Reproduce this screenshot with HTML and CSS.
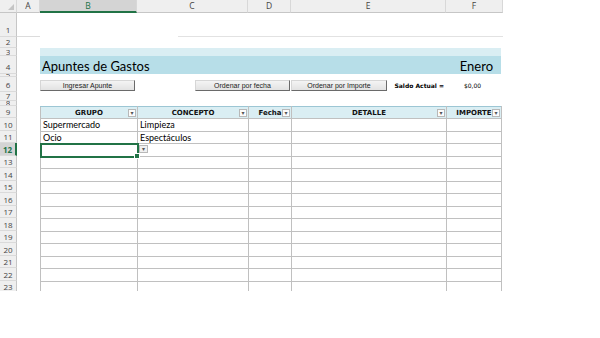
FILE: index.html
```html
<!DOCTYPE html>
<html lang="es">
<head>
    <meta charset="UTF-8">
    <meta name="viewport" content="width=device-width, initial-scale=1.0">
    <title>Apuntes de Gastos</title>
    <link rel="stylesheet" href="styles.css">
</head>
<body>

<div class="sheet">
    <div class="col-heads">
        <div class="corner"></div>
        <div class="col-a">A</div>
        <div class="col-b active">B</div>
        <div class="col-c">C</div>
        <div class="col-d">D</div>
        <div class="col-e">E</div>
        <div class="col-f">F</div>
    </div>

    <div class="sheet-body">
        <div class="row-heads">
            <div class="rh h1">1</div>
            <div class="rh h2">2</div>
            <div class="rh h3"><span>3</span></div>
            <div class="rh h4">4</div>
            <div class="rh h5"><span>5</span></div>
            <div class="rh h6">6</div>
            <div class="rh h7">7</div>
            <div class="rh h8"><span>8</span></div>
            <div class="rh h9">9</div>
            <div class="rh tall">10</div>
            <div class="rh">11</div>
            <div class="rh tall active">12</div>
            <div class="rh">13</div>
            <div class="rh tall">14</div>
            <div class="rh">15</div>
            <div class="rh tall">16</div>
            <div class="rh">17</div>
            <div class="rh tall">18</div>
            <div class="rh">19</div>
            <div class="rh tall">20</div>
            <div class="rh">21</div>
            <div class="rh tall">22</div>
            <div class="rh">23</div>
        </div>

        <div class="cells">
            <div class="line-row h1">
                <span class="line-a"></span>
                <span class="line-r"></span>
            </div>
            <div class="h2"></div>
            <div class="band h3"></div>
            <div class="title h4">
                <span>Apuntes de Gastos</span>
                <span>Enero</span>
            </div>
            <div class="h5"></div>
            <div class="toolbar h6">
                <button class="btn btn-ingresar">Ingresar Apunte</button>
                <button class="btn btn-fecha">Ordenar por fecha</button>
                <button class="btn btn-importe">Ordenar por Importe</button>
                <span class="saldo-label">Saldo Actual =</span>
                <span class="saldo-value">$0,00</span>
            </div>
            <div class="h7"></div>
            <div class="h8"></div>

            <table class="gastos">
                <colgroup>
                    <col class="w-b"><col class="w-c"><col class="w-d"><col class="w-e"><col class="w-f">
                </colgroup>
                <tr class="head">
                    <th>GRUPO<span class="filter">&#9662;</span></th>
                    <th>CONCEPTO<span class="filter">&#9662;</span></th>
                    <th>Fecha<span class="filter">&#9662;</span></th>
                    <th>DETALLE<span class="filter">&#9662;</span></th>
                    <th>IMPORTE<span class="filter">&#9662;</span></th>
                </tr>
                <tr class="tall"><td>Supermercado</td><td>Limpieza</td><td></td><td></td><td></td></tr>
                <tr><td>Ocio</td><td>Espectáculos</td><td></td><td></td><td></td></tr>
                <tr class="tall"><td class="active"></td><td><span class="pick">&#9662;</span></td><td></td><td></td><td></td></tr>
                <tr><td></td><td></td><td></td><td></td><td></td></tr>
                <tr class="tall"><td></td><td></td><td></td><td></td><td></td></tr>
                <tr><td></td><td></td><td></td><td></td><td></td></tr>
                <tr class="tall"><td></td><td></td><td></td><td></td><td></td></tr>
                <tr><td></td><td></td><td></td><td></td><td></td></tr>
                <tr class="tall"><td></td><td></td><td></td><td></td><td></td></tr>
                <tr><td></td><td></td><td></td><td></td><td></td></tr>
                <tr class="tall"><td></td><td></td><td></td><td></td><td></td></tr>
                <tr><td></td><td></td><td></td><td></td><td></td></tr>
                <tr class="tall"><td></td><td></td><td></td><td></td><td></td></tr>
                <tr><td></td><td></td><td></td><td></td><td></td></tr>
            </table>
        </div>
    </div>
</div>

</body>
</html>
```

FILE: styles.css
```css
* {
    box-sizing: border-box;
}
body {
    margin: 0;
    background: #fff;
    font-family: Lato, 'Open Sans', sans-serif;
    color: #000;
}
.sheet {
    width: 503px;
    height: 291px;
    overflow: hidden;
}

/* cabecera de columnas */
.col-heads {
    display: flex;
    height: 13px;
    background: #efefef;
    font-family: 'Open Sans', sans-serif;
    font-size: 8.5px;
    color: #444;
}
.col-heads div {
    border-right: 1px solid #d8d8d8;
    border-bottom: 1px solid #c6c6c6;
    text-align: center;
    line-height: 12px;
}
.col-heads .active {
    background: #d4d4d4;
    color: #217346;
    border-bottom: 2px solid #217346;
}
.corner {
    position: relative;
    width: 17px;
}
.corner::after {
    content: "";
    position: absolute;
    right: 2px;
    bottom: 2px;
    border-left: 6px solid transparent;
    border-bottom: 6px solid #c4c4c4;
}
.col-a { width: 23px; }
.col-b { width: 97px; }
.col-c { width: 111px; }
.col-d { width: 43px; }
.col-e { width: 155px; }
.col-f { width: 57px; }

/* alturas de filas */
.h1 { height: 24px; }
.h2 { height: 11px; }
.h3 { height: 8px; }
.h4 { height: 18px; }
.h5 { height: 3px; }
.h6 { height: 15px; }
.h7 { height: 9px; }
.h8 { height: 5px; }
.h9 { height: 12px; }

.sheet-body {
    display: flex;
}
.row-heads {
    width: 17px;
    background: #efefef;
}
.rh {
    height: 12px;
    border-right: 1px solid #c6c6c6;
    border-bottom: 1px solid #dadada;
    display: flex;
    align-items: flex-end;
    justify-content: center;
    overflow: hidden;
    font-family: 'Open Sans', sans-serif;
    font-size: 8px;
    line-height: 11px;
    color: #444;
}
.rh.h1 { height: 24px; padding-bottom: 1px; }
.rh.h2 { height: 11px; line-height: 10px; }
.rh.h3 { height: 8px; line-height: 7px; }
.rh.h4 { height: 18px; padding-bottom: 1px; }
.rh.h5 { height: 3px; line-height: 2px; }
.rh.h6 { height: 15px; padding-bottom: 1px; }
.rh.h7 { height: 9px; line-height: 8px; }
.rh.h8 { height: 5px; line-height: 4px; }
.rh.h9 { height: 12px; }
.rh.h3 span,
.rh.h5 span,
.rh.h8 span {
    display: block;
    overflow: hidden;
    height: 100%;
}
.rh.tall { height: 13px; }
.rh.active {
    background: #d4d4d4;
    color: #217346;
    font-weight: bold;
    border-right: 2px solid #217346;
}

.cells {
    flex: 1;
}
.line-row {
    display: flex;
    align-items: flex-end;
}
.line-a {
    width: 23px;
    border-bottom: 1px solid #dcdcdc;
}
.line-r {
    flex: 1;
    margin-left: 138px;
    border-bottom: 1px solid #e2e2e2;
}
.band {
    margin-left: 23px;
    width: 461px;
    background: #daeef3;
}
.title {
    margin-left: 23px;
    width: 461px;
    background: #b7dee8;
    display: flex;
    justify-content: space-between;
    align-items: flex-end;
    padding: 0 8px 0 2px;
    font-size: 13px;
    line-height: 16px;
}

/* botones */
.toolbar {
    display: flex;
    align-items: flex-start;
    padding: 3px 0 0 23px;
}
.btn {
    height: 11px;
    padding: 0;
    border: 1px solid #d6d6d6;
    border-right-color: #6a6a6a;
    border-bottom-color: #6a6a6a;
    background: linear-gradient(#f4f4f4, #e2e2e2);
    font-family: 'Liberation Sans', Arial, sans-serif;
    font-size: 7px;
    line-height: 9px;
    color: #222;
}
.btn-ingresar { width: 95px; }
.btn-fecha { width: 95px; margin-left: 60px; }
.btn-importe { width: 96px; margin-left: 1px; }
.saldo-label {
    width: 58px;
    text-align: right;
    padding-right: 1px;
    font-family: 'DejaVu Sans', sans-serif;
    font-weight: bold;
    font-size: 6px;
    line-height: 11px;
}
.saldo-value {
    width: 55px;
    text-align: center;
    font-family: 'DejaVu Sans', sans-serif;
    font-size: 6px;
    line-height: 11px;
}

/* tabla de apuntes */
.gastos {
    margin-left: 23px;
    width: 461px;
    table-layout: fixed;
    border-collapse: collapse;
}
.w-b { width: 97px; }
.w-c { width: 111px; }
.w-d { width: 43px; }
.w-e { width: 155px; }
.w-f { width: 55px; }
.gastos tr { height: 12px; }
.gastos tr.tall { height: 13px; }
.gastos th,
.gastos td {
    border: 1px solid #c0c0c0;
    padding: 0 2px;
    font-size: 9px;
    line-height: 10px;
    white-space: nowrap;
    overflow: visible;
    text-align: left;
}
.gastos th {
    position: relative;
    background: #daeef3;
    border-top-color: #9cc6d4;
    text-align: center;
    font-family: 'DejaVu Sans', sans-serif;
    font-size: 7px;
    font-weight: bold;
    color: #111;
    padding: 0;
}
.filter {
    position: absolute;
    right: 1px;
    top: 2px;
    width: 8px;
    height: 8px;
    border: 1px solid #b8b8b8;
    background: #fbfbfb;
    font-size: 6px;
    line-height: 6px;
    text-align: center;
    color: #555;
    font-weight: normal;
}
.gastos td.active {
    position: relative;
    outline: 2px solid #217346;
    outline-offset: -1px;
}
.gastos td.active::after {
    content: "";
    position: absolute;
    right: -3px;
    bottom: -3px;
    width: 4px;
    height: 4px;
    background: #217346;
    border: 1px solid #fff;
}
.pick {
    display: inline-block;
    width: 9px;
    height: 8px;
    margin-left: -1px;
    border: 1px solid #b8b8b8;
    background: #f0f0f0;
    font-size: 6px;
    line-height: 6px;
    text-align: center;
    color: #555;
    vertical-align: top;
}
```
